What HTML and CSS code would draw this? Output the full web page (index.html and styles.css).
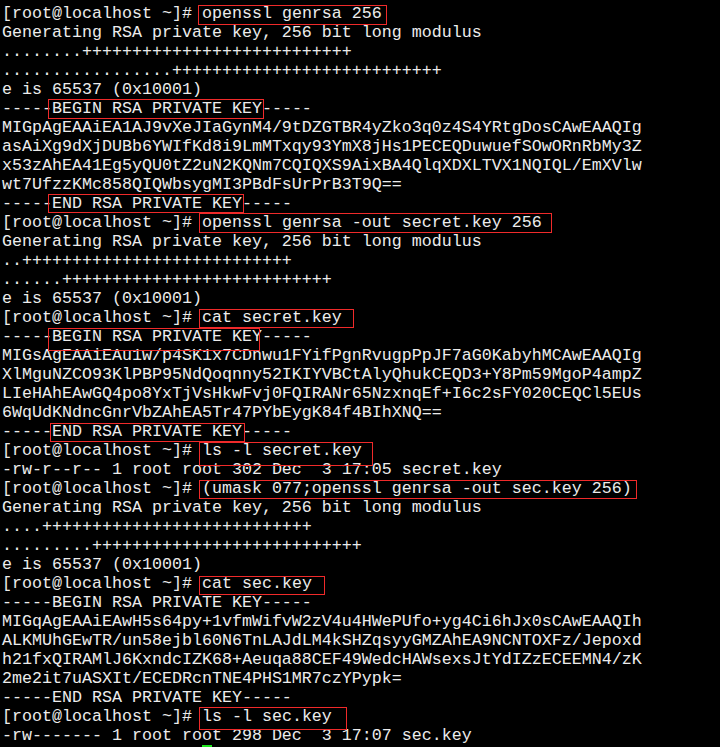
FILE: index.html
```html
<!DOCTYPE html>
<html>
<head>
<meta charset="utf-8">
<link rel="stylesheet" href="styles.css">
</head>
<body>
<div class="term">
<div class="ln">[root@localhost ~]# <span class="box b1">openssl genrsa 256</span></div>
<div class="ln">Generating RSA private key, 256 bit long modulus</div>
<div class="ln">........+++++++++++++++++++++++++++</div>
<div class="ln">.................+++++++++++++++++++++++++++</div>
<div class="ln">e is 65537 (0x10001)</div>
<div class="ln">-----<span class="box b2">BEGIN RSA PRIVATE KEY</span>-----</div>
<div class="ln">MIGpAgEAAiEA1AJ9vXeJIaGynM4/9tDZGTBR4yZko3q0z4S4YRtgDosCAwEAAQIg</div>
<div class="ln">asAiXg9dXjDUBb6YWIfKd8i9LmMTxqy93YmX8jHs1PECEQDuwuefSOwORnRbMy3Z</div>
<div class="ln">x53zAhEA41Eg5yQU0tZ2uN2KQNm7CQIQXS9AixBA4QlqXDXLTVX1NQIQL/EmXVlw</div>
<div class="ln">wt7UfzzKMc858QIQWbsygMI3PBdFsUrPrB3T9Q==</div>
<div class="ln">-----<span class="box b3">END RSA PRIVATE KEY</span>-----</div>
<div class="ln">[root@localhost ~]# <span class="box b4">openssl genrsa -out secret.key 256</span></div>
<div class="ln">Generating RSA private key, 256 bit long modulus</div>
<div class="ln">..+++++++++++++++++++++++++++</div>
<div class="ln">......+++++++++++++++++++++++++++</div>
<div class="ln">e is 65537 (0x10001)</div>
<div class="ln">[root@localhost ~]# <span class="box b5">cat secret.key</span></div>
<div class="ln">-----<span class="box b6">BEGIN RSA PRIVATE KEY</span>-----</div>
<div class="ln">MIGsAgEAAiEAu1w/p4SK1x7CDnwu1FYifPgnRvugpPpJF7aG0KabyhMCAwEAAQIg</div>
<div class="ln">XlMguNZCO93KlPBP95NdQoqnny52IKIYVBCtAlyQhukCEQD3+Y8Pm59MgoP4ampZ</div>
<div class="ln">LIeHAhEAwGQ4po8YxTjVsHkwFvj0FQIRANr65NzxnqEf+I6c2sFY020CEQCl5EUs</div>
<div class="ln">6WqUdKNdncGnrVbZAhEA5Tr47PYbEygK84f4BIhXNQ==</div>
<div class="ln">-----<span class="box b7">END RSA PRIVATE KEY</span>-----</div>
<div class="ln">[root@localhost ~]# <span class="box b8">ls -l secret.key</span></div>
<div class="ln">-rw-r--r-- 1 root root 302 Dec  3 17:05 secret.key</div>
<div class="ln">[root@localhost ~]# <span class="box b9">(umask 077;openssl genrsa -out sec.key 256)</span></div>
<div class="ln">Generating RSA private key, 256 bit long modulus</div>
<div class="ln">....+++++++++++++++++++++++++++</div>
<div class="ln">.........+++++++++++++++++++++++++++</div>
<div class="ln">e is 65537 (0x10001)</div>
<div class="ln">[root@localhost ~]# <span class="box b10">cat sec.key</span></div>
<div class="ln">-----BEGIN RSA PRIVATE KEY-----</div>
<div class="ln">MIGqAgEAAiEAwH5s64py+1vfmWifvW2zV4u4HWePUfo+yg4Ci6hJx0sCAwEAAQIh</div>
<div class="ln">ALKMUhGEwTR/un58ejbl60N6TnLAJdLM4kSHZqsyyGMZAhEA9NCNTOXFz/Jepoxd</div>
<div class="ln">h21fxQIRAMlJ6KxndcIZK68+Aeuqa88CEF49WedcHAWsexsJtYdIZzECEEMN4/zK</div>
<div class="ln">2me2it7uASXIt/ECEDRcnTNE4PHS1MR7czYPypk=</div>
<div class="ln">-----END RSA PRIVATE KEY-----</div>
<div class="ln">[root@localhost ~]# <span class="box b11">ls -l sec.key</span></div>
<div class="ln">-rw------- 1 root root 298 Dec  3 17:07 sec.key</div>
<div class="ln prompt-line"><span class="cursor"></span></div>
</div>
</body>
</html>
```
FILE: styles.css
```css
html, body {
  margin: 0;
  padding: 0;
  background: #000;
}
body {
  width: 720px;
  height: 747px;
  overflow: hidden;
}
.term {
  padding: 4px 0 0 2px;
  font-family: "Liberation Mono", "Courier New", monospace;
  font-size: 16.67px;
  line-height: 19px;
  color: #ececec;
}
.ln {
  white-space: pre;
  height: 19px;
}
.box {
  position: relative;
}
.box::after {
  content: "";
  position: absolute;
  left: -4px;
  right: -5px;
  top: 1px;
  height: 19px;
  border: 1px solid #f02a2a;
  box-sizing: border-box;
  pointer-events: none;
}
.b1::after { left: -4px; right: -5px; top: 1px; height: 20px; }
.b2::after { left: -4px; right: -2px; top: 0; height: 20px; }
.b3::after { left: -4px; right: -2px; top: 0; height: 19px; }
.b4::after { left: -3px; right: -10px; top: 0; height: 20px; }
.b5::after { left: -3px; right: -12px; top: 1px; height: 19px; }
.b6::after { left: -4px; right: 2px; top: 1px; height: 23px; }
.b7::after { left: -2px; right: -3px; top: 1px; height: 19px; }
.b8::after { left: -3px; right: -11px; top: 1px; height: 24px; }
.b9::after { left: -3px; right: -5px; top: 1px; height: 19px; }
.b10::after { left: -3px; right: -13px; top: 2px; height: 19px; }
.b11::after { left: -3px; right: -15px; top: 0; height: 23px; }
.prompt-line {
  padding-left: 200px;
}
.cursor {
  display: inline-block;
  width: 10px;
  height: 19px;
  vertical-align: top;
  background: #1ee61e;
}
```
